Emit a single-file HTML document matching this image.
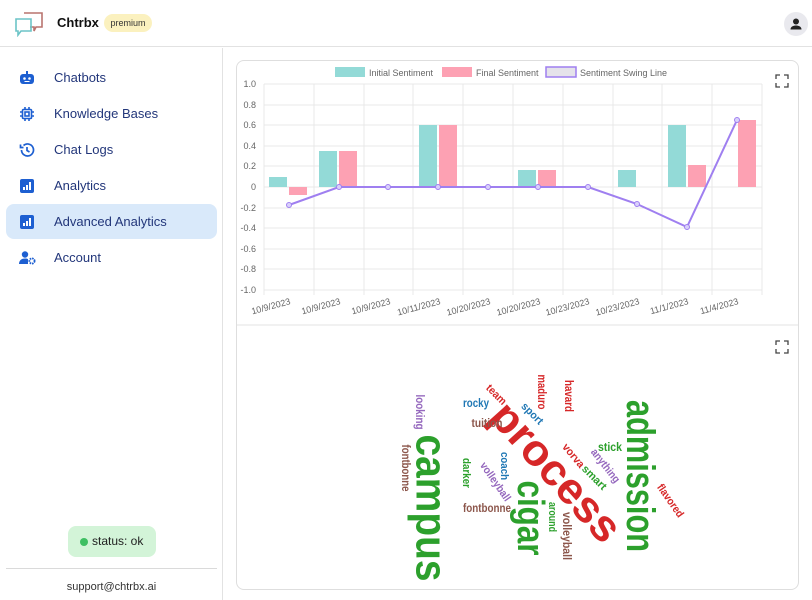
<!DOCTYPE html>
<html><head><meta charset="utf-8"><style>
*{margin:0;padding:0;box-sizing:border-box}
body{width:812px;height:600px;overflow:hidden;background:#fff;font-family:"Liberation Sans",sans-serif;position:relative}
.hdr{position:absolute;left:0;top:0;width:812px;height:47px;border-bottom:1px solid #e2e2e2}
.side{position:absolute;left:0;top:48px;width:223px;height:552px;border-right:1px solid #e2e2e2}
.item{position:absolute;left:6px;width:211px;height:35px;border-radius:8px;font-size:13px;color:#22367a;line-height:35px;padding-left:48px}
.item.act{background:#d9e9fa}
.item svg{position:absolute;left:13px;top:10px}
.card{position:absolute;left:236px;top:60px;width:563px;height:530px;border:1px solid #dedede;border-radius:8px}
</style></head><body>
<div class="hdr">
<svg style="position:absolute;left:14px;top:11px" width="34" height="26" viewBox="0 0 34 26" fill="none">
<path d="M10 2h18v14h-6l-2 4v-4h-4" stroke="#b9746f" stroke-width="1.6"/>
<path d="M2 8h15v12H7l-3 4v-4H2z" stroke="#6cc4c7" stroke-width="1.6"/>
</svg>
<div style="position:absolute;left:57px;top:15px;font-size:13px;font-weight:bold;color:#111">Chtrbx</div>
<div style="position:absolute;left:104px;top:14px;width:48px;height:18px;border-radius:9px;background:#fbf1bf;font-size:9px;line-height:18px;text-align:center;color:#333">premium</div>
<div style="position:absolute;left:784px;top:12px;width:24px;height:24px;border-radius:12px;background:#e9e9ee">
<svg width="24" height="24" viewBox="0 0 24 24"><circle cx="12" cy="9.5" r="3" fill="#222"/><path d="M6.5 17.5c0-3 3-4 5.5-4s5.5 1 5.5 4z" fill="#222"/></svg></div>
</div>
<div class="side">
<div class="item" style="top:12px"><svg width="16" height="16" viewBox="0 0 16 16"><rect x="1" y="4" width="14" height="10" rx="3" fill="#1d5fd1"/><rect x="7" y="1" width="2" height="3" fill="#1d5fd1"/><circle cx="5.5" cy="8.5" r="1.3" fill="#fff"/><circle cx="10.5" cy="8.5" r="1.3" fill="#fff"/><rect x="5.5" y="11" width="5" height="1" fill="#fff"/></svg>Chatbots</div>
<div class="item" style="top:48px"><svg width="16" height="16" viewBox="0 0 16 16" fill="none" stroke="#1d5fd1" stroke-width="1.6"><rect x="3.5" y="3.5" width="9" height="9" rx="1"/><rect x="6" y="6" width="4" height="4"/><path d="M6 1v2M10 1v2M6 13v2M10 13v2M1 6h2M1 10h2M13 6h2M13 10h2"/></svg>Knowledge Bases</div>
<div class="item" style="top:84px"><svg width="16" height="16" viewBox="0 0 16 16" fill="none" stroke="#1d5fd1" stroke-width="1.7"><path d="M2.5 8a6 6 0 1 0 2-4.5"/><path d="M1.5 2.5v3h3"/><path d="M8 5v3.5l2.5 1.5"/></svg>Chat Logs</div>
<div class="item" style="top:120px"><svg width="16" height="16" viewBox="0 0 16 16"><rect x="1" y="1" width="14" height="14" rx="2" fill="#1d5fd1"/><rect x="4" y="9" width="2" height="3" fill="#fff"/><rect x="7" y="7" width="2" height="5" fill="#fff"/><rect x="10" y="4" width="2" height="8" fill="#fff"/></svg>Analytics</div>
<div class="item act" style="top:156px"><svg width="16" height="16" viewBox="0 0 16 16"><rect x="1" y="1" width="14" height="14" rx="2" fill="#1d5fd1"/><rect x="4" y="9" width="2" height="3" fill="#fff"/><rect x="7" y="7" width="2" height="5" fill="#fff"/><rect x="10" y="4" width="2" height="8" fill="#fff"/></svg>Advanced Analytics</div>
<div class="item" style="top:192px"><svg width="17" height="16" viewBox="0 0 17 16"><circle cx="6" cy="4.5" r="3.2" fill="#1d5fd1"/><path d="M0 14c0-4 3-5.5 6-5.5 1.5 0 2.5.3 3 .6V14z" fill="#1d5fd1"/><circle cx="13" cy="11" r="2.6" fill="none" stroke="#1d5fd1" stroke-width="1.8" stroke-dasharray="1.6 .8"/></svg>Account</div>
<div style="position:absolute;left:68px;top:478px;width:88px;height:31px;border-radius:8px;background:#d3f4d8;font-size:12px;line-height:31px;color:#222;padding-left:24px"><span style="position:absolute;left:12px;top:12px;width:8px;height:8px;border-radius:4px;background:#3fbf63"></span>status: ok</div>
<div style="position:absolute;left:6px;top:520px;width:211px;border-top:1px solid #dadada"></div>
<div style="position:absolute;left:0;top:533px;width:223px;text-align:center;font-size:11px;color:#333">support@chtrbx.ai</div>
</div>
<div class="card"></div>
<svg style="position:absolute;left:0;top:0" width="812" height="600">
<g font-family="Liberation Sans" font-size="9" fill="#666">
<rect x="335" y="67" width="30" height="10" fill="#93dad7"/><text x="369" y="76">Initial Sentiment</text>
<rect x="442" y="67" width="30" height="10" fill="#fda1b3"/><text x="476" y="76">Final Sentiment</text>
<rect x="546" y="67" width="30" height="10" fill="#e5e3ea" stroke="#9f7ff0" stroke-width="1.5"/><text x="580" y="76">Sentiment Swing Line</text>
</g>
<path d="M776 79v-4h4M784 75h4v4M788 83v4h-4M780 87h-4v-4" fill="none" stroke="#444" stroke-width="1.3"/>
<path d="M776 345v-4h4M784 341h4v4M788 349v4h-4M780 353h-4v-4" fill="none" stroke="#444" stroke-width="1.3"/>
<line x1="237" y1="325" x2="798" y2="325" stroke="#e3e3e3"/>
<g stroke="#e8e8e8" stroke-width="1">
<line x1="264" y1="84" x2="762" y2="84"/><line x1="264" y1="105" x2="762" y2="105"/><line x1="264" y1="125" x2="762" y2="125"/><line x1="264" y1="146" x2="762" y2="146"/><line x1="264" y1="166" x2="762" y2="166"/><line x1="264" y1="187" x2="762" y2="187"/><line x1="264" y1="208" x2="762" y2="208"/><line x1="264" y1="228" x2="762" y2="228"/><line x1="264" y1="249" x2="762" y2="249"/><line x1="264" y1="269" x2="762" y2="269"/><line x1="264" y1="290" x2="762" y2="290"/>
<line x1="264" y1="84" x2="264" y2="295"/><line x1="314" y1="84" x2="314" y2="295"/><line x1="364" y1="84" x2="364" y2="295"/><line x1="413" y1="84" x2="413" y2="295"/><line x1="463" y1="84" x2="463" y2="295"/><line x1="513" y1="84" x2="513" y2="295"/><line x1="563" y1="84" x2="563" y2="295"/><line x1="613" y1="84" x2="613" y2="295"/><line x1="662" y1="84" x2="662" y2="295"/><line x1="712" y1="84" x2="712" y2="295"/><line x1="762" y1="84" x2="762" y2="295"/>
</g>
<g font-family="Liberation Sans" font-size="9" fill="#666" text-anchor="end">
<text x="256" y="87">1.0</text><text x="256" y="108">0.8</text><text x="256" y="128">0.6</text><text x="256" y="149">0.4</text><text x="256" y="169">0.2</text><text x="256" y="190">0</text><text x="256" y="211">-0.2</text><text x="256" y="231">-0.4</text><text x="256" y="252">-0.6</text><text x="256" y="272">-0.8</text><text x="256" y="293">-1.0</text>
</g>
<g font-family="Liberation Sans" font-size="9" fill="#666" text-anchor="end">
<text transform="translate(291,304) rotate(-15)">10/9/2023</text>
<text transform="translate(341,304) rotate(-15)">10/9/2023</text>
<text transform="translate(391,304) rotate(-15)">10/9/2023</text>
<text transform="translate(441,304) rotate(-15)">10/11/2023</text>
<text transform="translate(491,304) rotate(-15)">10/20/2023</text>
<text transform="translate(541,304) rotate(-15)">10/20/2023</text>
<text transform="translate(590,304) rotate(-15)">10/23/2023</text>
<text transform="translate(640,304) rotate(-15)">10/23/2023</text>
<text transform="translate(689,304) rotate(-15)">11/1/2023</text>
<text transform="translate(739,304) rotate(-15)">11/4/2023</text>
</g>
<g fill="#93dad7">
<rect x="269" y="177" width="18" height="10"/><rect x="319" y="151" width="18" height="36"/><rect x="419" y="125" width="18" height="62"/><rect x="518" y="170" width="18" height="17"/><rect x="618" y="170" width="18" height="17"/><rect x="668" y="125" width="18" height="62"/>
</g>
<g fill="#fda1b3">
<rect x="289" y="187" width="18" height="8"/><rect x="339" y="151" width="18" height="36"/><rect x="439" y="125" width="18" height="62"/><rect x="538" y="170" width="18" height="17"/><rect x="688" y="165" width="18" height="22"/><rect x="738" y="120" width="18" height="67"/>
</g>
<polyline points="289,205 339,187 388,187 438,187 488,187 538,187 588,187 637,204 687,227 737,120" fill="none" stroke="#9f7ff0" stroke-width="2"/>
<g fill="#d9d0fb" stroke="#9f7ff0" stroke-width="1"><circle cx="289" cy="205" r="2.5"/><circle cx="339" cy="187" r="2.5"/><circle cx="388" cy="187" r="2.5"/><circle cx="438" cy="187" r="2.5"/><circle cx="488" cy="187" r="2.5"/><circle cx="538" cy="187" r="2.5"/><circle cx="588" cy="187" r="2.5"/><circle cx="637" cy="204" r="2.5"/><circle cx="687" cy="227" r="2.5"/><circle cx="737" cy="120" r="2.5"/></g>
<g font-family="Liberation Sans Narrow,Liberation Sans" font-weight="bold" text-anchor="middle" dominant-baseline="central" lengthAdjust="spacingAndGlyphs">
<text transform="translate(431,508) rotate(90)" font-size="44" fill="#2ca02c" textLength="147" lengthAdjust="spacingAndGlyphs">campus</text>
<text transform="translate(640,476) rotate(90)" font-size="40" fill="#2ca02c" textLength="152" lengthAdjust="spacingAndGlyphs">admission</text>
<text transform="translate(556,472) rotate(48)" font-size="44" fill="#d62728" textLength="172" lengthAdjust="spacingAndGlyphs">process</text>
<text transform="translate(530,518) rotate(90)" font-size="38" fill="#2ca02c" textLength="75" lengthAdjust="spacingAndGlyphs">cigar</text>
<text transform="translate(406,468) rotate(90)" font-size="12" fill="#8c564b" textLength="47" lengthAdjust="spacingAndGlyphs">fontbonne</text>
<text transform="translate(420,412) rotate(90)" font-size="12" fill="#9467bd" textLength="35" lengthAdjust="spacingAndGlyphs">looking</text>
<text transform="translate(496,395) rotate(45)" font-size="11" fill="#d62728" textLength="24" lengthAdjust="spacingAndGlyphs">team</text>
<text transform="translate(542,392) rotate(90)" font-size="12" fill="#d62728" textLength="35" lengthAdjust="spacingAndGlyphs">maduro</text>
<text transform="translate(569,396) rotate(90)" font-size="12" fill="#d62728" textLength="32" lengthAdjust="spacingAndGlyphs">havard</text>
<text x="476" y="403" font-size="12" fill="#1f77b4" textLength="26" lengthAdjust="spacingAndGlyphs">rocky</text>
<text transform="translate(532,414) rotate(45)" font-size="11" fill="#1f77b4" textLength="26" lengthAdjust="spacingAndGlyphs">sport</text>
<text x="487" y="423" font-size="12" fill="#8c564b" textLength="31" lengthAdjust="spacingAndGlyphs">tuition</text>
<text x="610" y="447" font-size="12" fill="#2ca02c" textLength="24" lengthAdjust="spacingAndGlyphs">stick</text>
<text transform="translate(573,456) rotate(50)" font-size="11" fill="#d62728" textLength="28" lengthAdjust="spacingAndGlyphs">vorva</text>
<text transform="translate(605,466) rotate(52)" font-size="11" fill="#9467bd" textLength="40" lengthAdjust="spacingAndGlyphs">anything</text>
<text transform="translate(594,478) rotate(45)" font-size="11" fill="#2ca02c" textLength="30" lengthAdjust="spacingAndGlyphs">smart</text>
<text transform="translate(466,473) rotate(90)" font-size="11" fill="#2ca02c" textLength="30" lengthAdjust="spacingAndGlyphs">darker</text>
<text transform="translate(504,466) rotate(90)" font-size="11" fill="#1f77b4" textLength="28" lengthAdjust="spacingAndGlyphs">coach</text>
<text transform="translate(495,482) rotate(55)" font-size="11" fill="#9467bd" textLength="45" lengthAdjust="spacingAndGlyphs">volleyball</text>
<text x="487" y="508" font-size="12" fill="#8c564b" textLength="48" lengthAdjust="spacingAndGlyphs">fontbonne</text>
<text transform="translate(552,517) rotate(90)" font-size="11" fill="#2ca02c" textLength="30" lengthAdjust="spacingAndGlyphs">around</text>
<text transform="translate(567,536) rotate(90)" font-size="12" fill="#8c564b" textLength="48" lengthAdjust="spacingAndGlyphs">volleyball</text>
<text transform="translate(670,501) rotate(55)" font-size="11" fill="#d62728" textLength="38" lengthAdjust="spacingAndGlyphs">flavored</text>
</g>
</svg>
</body></html>
